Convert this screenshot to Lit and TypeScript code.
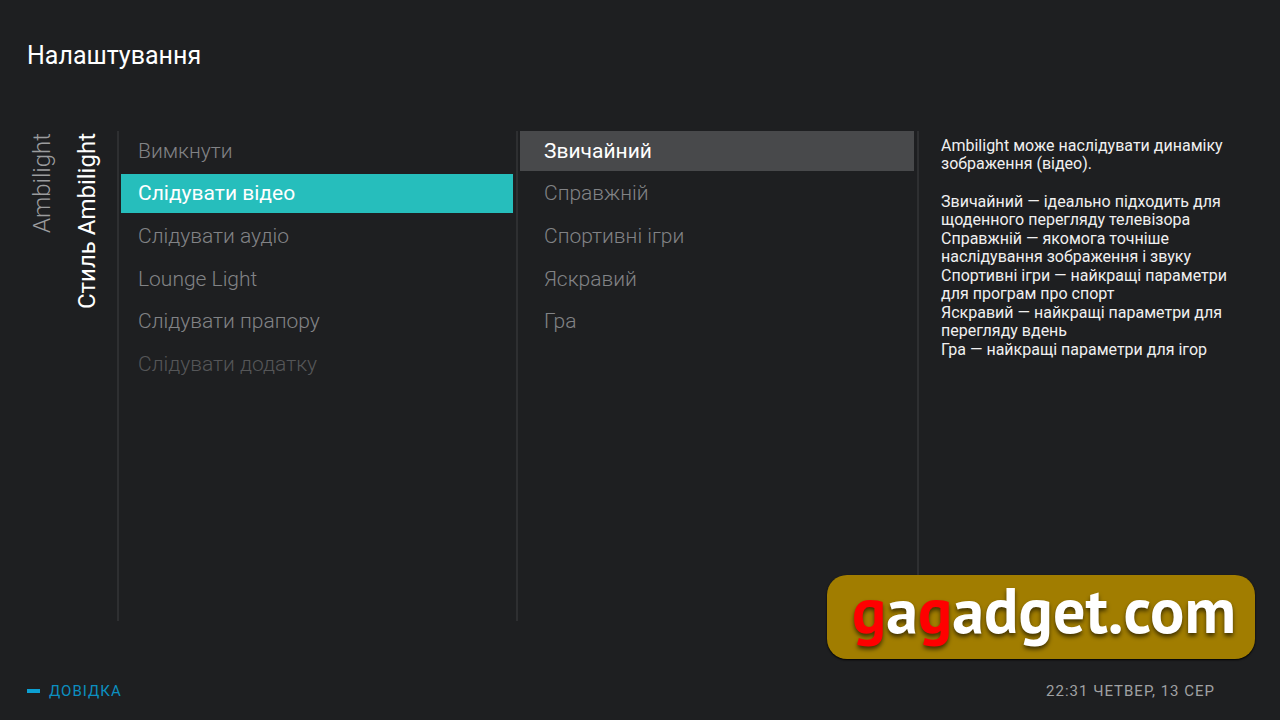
import { LitElement, html, css } from "lit";
import { customElement, property, state } from "lit/decorators.js";
import { classMap } from "lit/directives/class-map.js";

interface Option {
  label: string;
  disabled?: boolean;
}

@customElement("option-list")
export class OptionList extends LitElement {
  @property({ attribute: false }) options: Option[] = [];
  @property({ type: Number }) selected = 0;
  @property({ type: Boolean, reflect: true }) focused = false;
  @property() name = "";

  static styles = css`
    :host {
      display: block;
      box-sizing: border-box;
      min-width: 0;
      border-left: 2px solid #2e2f31;
      padding: 0 3px 0 2px;
    }
    .list {
      display: grid;
      grid-template-rows: repeat(6, 1fr);
      row-gap: 3px;
      height: 253px;
      margin: 0;
      padding: 0;
      list-style: none;
    }
    .item {
      display: flex;
    }
    .option {
      flex: 1;
      border: 0;
      margin: 0;
      padding: 0 17px;
      background: none;
      color: #828386;
      font: 300 21px/26px Roboto, sans-serif;
      text-align: left;
      cursor: pointer;
    }
    :host(:not([focused])) .option {
      padding-left: 24px;
    }
    .option:disabled {
      color: #555658;
      cursor: default;
    }
    .option.selected {
      background: #48494b;
      color: #fff;
      font-weight: 400;
    }
    :host([focused]) .option.selected {
      background: #26bebc;
    }
  `;

  private choose(index: number) {
    this.selected = index;
  }

  render() {
    return html`
      <ul class="list" aria-label=${this.name}>
        ${this.options.map(
          (o, i) => html`<li class="item">
            <button
              type="button"
              class=${classMap({ option: true, selected: i === this.selected })}
              ?disabled=${o.disabled}
              aria-pressed=${i === this.selected}
              @click=${() => this.choose(i)}
            >${o.label}</button>
          </li>`
        )}
      </ul>
    `;
  }
}

@customElement("app-root")
export class AppRoot extends LitElement {
  @state() private level = 1;

  private levels = ["Ambilight", "Стиль Ambilight"];
  private styleOptions: Option[] = [
    { label: "Вимкнути" },
    { label: "Слідувати відео" },
    { label: "Слідувати аудіо" },
    { label: "Lounge Light" },
    { label: "Слідувати прапору" },
    { label: "Слідувати додатку", disabled: true },
  ];
  private videoOptions: Option[] = [
    { label: "Звичайний" },
    { label: "Справжній" },
    { label: "Спортивні ігри" },
    { label: "Яскравий" },
    { label: "Гра" },
  ];
  private hints = [
    "Звичайний — ідеально підходить для щоденного перегляду телевізора",
    "Справжній — якомога точніше наслідування зображення і звуку",
    "Спортивні ігри — найкращі параметри для програм про спорт",
    "Яскравий — найкращі параметри для перегляду вдень",
    "Гра — найкращі параметри для ігор",
  ];

  static styles = css`
    :host {
      display: flex;
      flex-direction: column;
      position: relative;
      box-sizing: border-box;
      min-height: 100vh;
      background: #1e1f21;
      color: #fff;
      font-family: Roboto, sans-serif;
    }
    .header {
      padding: 41px 27px 60px;
    }
    .title {
      margin: 0;
      font-size: 25px;
      line-height: 30px;
      font-weight: 400;
    }
    .main {
      flex: 1;
      display: grid;
      grid-template-columns: 117fr 399fr 401fr 363fr;
    }
    .levels {
      display: flex;
      align-items: flex-start;
      gap: 15px;
      padding: 2px 0 0 27px;
    }
    .level {
      border: 0;
      margin: 0;
      padding: 0;
      background: none;
      color: #9b9c9e;
      font: 300 24px/30px Roboto, sans-serif;
      writing-mode: vertical-rl;
      transform: rotate(180deg);
      white-space: nowrap;
      cursor: pointer;
    }
    .current {
      color: #fff;
      font-weight: 400;
    }
    .help-text {
      border-left: 2px solid #2e2f31;
      padding: 6px 45px 0 22px;
      font-size: 16px;
      line-height: 18px;
      color: #f0f0f0;
    }
    .intro {
      margin: 0 0 20px;
    }
    .hint {
      margin: 0 0 1px;
    }
    .footer {
      display: flex;
      justify-content: space-between;
      align-items: center;
      padding: 60px 65px 19px 27px;
      font-size: 15px;
      line-height: 20px;
      letter-spacing: 1px;
      color: #a0a1a3;
    }
    .help {
      display: flex;
      align-items: center;
      gap: 9px;
      border: 0;
      margin: 0;
      padding: 0;
      background: none;
      color: #0c8fc0;
      font: inherit;
      letter-spacing: inherit;
      cursor: pointer;
    }
    .key {
      width: 13px;
      height: 4px;
      background: #0c9fd2;
    }
    .watermark {
      position: absolute;
      right: 25px;
      bottom: 61px;
      box-sizing: border-box;
      width: 428px;
      height: 84px;
      padding-left: 6px;
      border-radius: 20px;
      background: #a17d00;
      box-shadow: 0 1px 2px #000;
      font: 700 64px/70px "PT Sans", "Noto Sans", sans-serif;
      text-align: center;
      white-space: nowrap;
      text-shadow: 0 3px 4px rgba(0, 0, 0, 0.6);
    }
    .accent {
      color: #f00;
    }
  `;

  render() {
    return html`
      <header class="header"><h1 class="title">Налаштування</h1></header>
      <main class="main">
        <nav class="levels">
          ${this.levels.map(
            (label, i) => html`<button
              type="button"
              class=${classMap({ level: true, current: i === this.level })}
              @click=${() => (this.level = i)}
            >${label}</button>`
          )}
        </nav>
        <option-list focused name="Стиль Ambilight" .options=${this.styleOptions} .selected=${1}></option-list>
        <option-list name="Слідувати відео" .options=${this.videoOptions} .selected=${0}></option-list>
        <section class="help-text">
          <p class="intro">Ambilight може наслідувати динаміку зображення (відео).</p>
          ${this.hints.map((h) => html`<p class="hint">${h}</p>`)}
        </section>
      </main>
      <footer class="footer">
        <button type="button" class="help"><span class="key"></span>ДОВІДКА</button>
        <time>22:31 ЧЕТВЕР, 13 СЕР</time>
      </footer>
      <div class="watermark"><span class="accent">g</span>a<span class="accent">g</span>adget.com</div>
    `;
  }
}
